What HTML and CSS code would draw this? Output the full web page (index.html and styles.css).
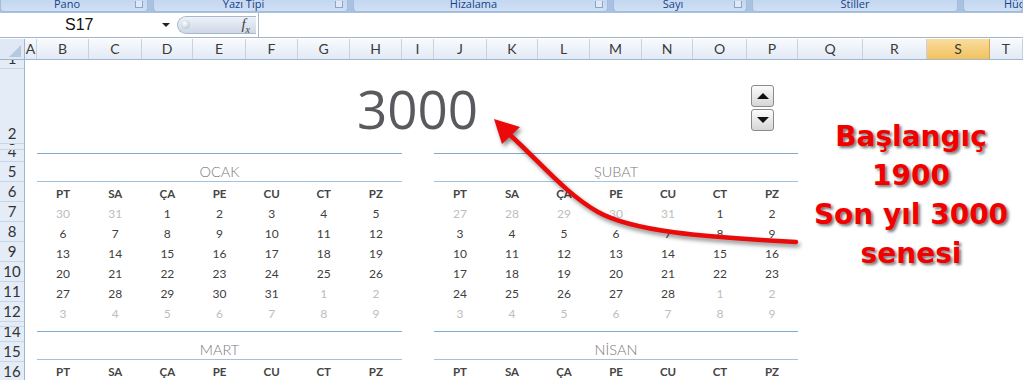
FILE: index.html
```html
<!DOCTYPE html>
<html lang="tr">
<head>
<meta charset="UTF-8">
<title>Takvim 3000</title>
<link rel="stylesheet" href="styles.css">
</head>
<body>
    <div class="ribbon">
        <div class="group g-pano"><span>Pano</span><i class="launcher"></i></div>
        <div class="group g-font"><span>Yazı Tipi</span><i class="launcher"></i></div>
        <div class="group g-align"><span>Hizalama</span><i class="launcher"></i></div>
        <div class="group g-num"><span>Sayı</span><i class="launcher"></i></div>
        <div class="group g-style"><span>Stiller</span></div>
        <div class="group g-cells"><span>Hücreler</span></div>
    </div>

    <div class="formula-bar">
        <div class="name-box"><span>S17</span><i class="dd"></i></div>
        <div class="fx-pill"><i class="grip"></i><span class="fx">f<sub>x</sub></span></div>
        <div class="formula-input"></div>
    </div>

    <div class="sheet">
        <div class="corner"><i></i></div>
        <div class="col-heads">
            <div>A</div><div>B</div><div>C</div><div>D</div><div>E</div>
            <div>F</div><div>G</div><div>H</div><div>I</div><div>J</div>
            <div>K</div><div>L</div><div>M</div><div>N</div><div>O</div>
            <div>P</div><div>Q</div><div>R</div><div class="sel">S</div><div>T</div>
        </div>
        <div class="row-heads">
            <div>1</div><div>2</div><div>3</div><div>4</div>
            <div>5</div><div>6</div><div>7</div><div>8</div>
            <div>9</div><div>10</div><div>11</div><div>12</div>
            <div>13</div><div>14</div><div>15</div><div>16</div>
        </div>
        <div class="cells">
            <div class="year" id="year">3000</div>
            <div class="spin">
                <div class="spin-btn"><i class="tri-up"></i></div>
                <div class="spin-btn"><i class="tri-down"></i></div>
            </div>
            <div class="cal-stack left">
                <div class="cal" data-month="0"></div>
                <div class="cal" data-month="2"></div>
            </div>
            <div class="cal-stack right">
                <div class="cal" data-month="1"></div>
                <div class="cal" data-month="3"></div>
            </div>
        </div>
    </div>

    <!-- note on top of the sheet -->
    <svg class="arrow" width="1023" height="380" viewBox="0 0 1023 380">
        <path d="M 796 242 C 700 237 632 231 598 212 C 566 194 540 162 509 134" fill="none" stroke="#ea0a0a" stroke-width="4.5" stroke-linecap="round"/>
        <polygon points="494,119 520,127 502,144" fill="#ea0a0a"/>
    </svg>
    <div class="note">Başlangıç<br>1900<br>Son yıl 3000<br>senesi</div>

    <script>
        const MONTHS = ['OCAK', 'ŞUBAT', 'MART', 'NİSAN'];
        const DAYS = ['PT', 'SA', 'ÇA', 'PE', 'CU', 'CT', 'PZ'];
        let year = parseInt(document.getElementById('year').textContent);

        function buildCal(cal) {
            let month = parseInt(cal.dataset.month);
            let first = new Date(year, month, 1);
            first.setFullYear(year);
            let offset = (first.getDay() + 6) % 7;

            let html = '<div class="cal-title">' + MONTHS[month] + '</div><div class="cal-days">';
            DAYS.forEach(d => { html += '<div class="dow">' + d + '</div>'; });

            for (let i = 0; i < 42; i++) {
                let day = new Date(first);
                day.setDate(1 - offset + i);
                let cls = day.getMonth() === month ? '' : ' class="other"';
                html += '<div' + cls + '>' + day.getDate() + '</div>';
            }
            cal.innerHTML = html + '</div>';
        }

        document.querySelectorAll('.cal').forEach(buildCal);
    </script>
</body>
</html>
```

FILE: styles.css
```css
:root {
    --cols: 12px 52px 53px 51px 53px 52px 52px 52px 32px 53px 51px 52px 52px 51px 54px 51px 65px 64px 63px 1fr;
    --rows: 9px 75px 6px 12px 20px 20px 20px 20px 20px 20px 20px 20px 5px 15px 20px 20px;
}

body, html {
    margin: 0;
    padding: 0;
}
body {
    position: relative;
    width: 1023px;
    height: 380px;
    overflow: hidden;
    background: #fff;
    font-family: Lato, "Open Sans", sans-serif;
}

/* RIBBON */
.ribbon {
    display: flex;
    gap: 5px;
    height: 13px;
    background: #a9c2e2;
}
.group {
    position: relative;
    box-sizing: border-box;
    height: 12px;
    background: linear-gradient(#c3d7f0, #d0e0f4);
    border: 1px solid #a3bcdc;
    border-top: 0;
    border-radius: 0 0 4px 4px;
    color: #15428b;
    font-family: "Open Sans", sans-serif;
    font-size: 11px;
    line-height: 7px;
    text-align: center;
    overflow: hidden;
    padding-right: 14px;
}
.g-pano { width: 148px; }
.g-font { width: 195px; }
.g-align { width: 255px; }
.g-num { width: 134px; }
.g-style { width: 206px; padding-right: 0; }
.g-cells { flex: 1; text-align: left; padding-left: 40px; }
.launcher {
    position: absolute;
    right: 4px;
    top: 1px;
    width: 6px;
    height: 6px;
    border: 1px solid #8aa5c8;
    border-top: 0;
    background: #dfe9f6;
}

/* FORMULA BAR */
.formula-bar {
    display: flex;
    height: 24px;
    border-bottom: 1px solid #a3b5cb;
    margin-bottom: 1px;
    background: #fff;
}
.name-box {
    position: relative;
    width: 175px;
    font-family: "Liberation Sans", sans-serif;
    font-size: 16px;
    line-height: 24px;
    padding-left: 65px;
    box-sizing: border-box;
    color: #111;
}
.dd {
    position: absolute;
    left: 162px;
    top: 10px;
    border-left: 4px solid transparent;
    border-right: 4px solid transparent;
    border-top: 4px solid #222;
}
.fx-pill {
    position: relative;
    width: 79px;
    height: 18px;
    margin: 3px 0 0 2px;
    box-sizing: border-box;
    border: 1px solid #a9b9cd;
    border-right: 0;
    border-radius: 10px 0 0 10px;
    background: linear-gradient(#eef2f8, #cdd8e6);
}
.grip {
    position: absolute;
    left: 3px;
    top: 3px;
    width: 9px;
    height: 9px;
    border-radius: 50%;
    background: radial-gradient(circle at 40% 35%, #fff, #aab7c8);
}
.fx {
    position: absolute;
    right: 6px;
    top: -1px;
    font-family: "Liberation Serif", serif;
    font-style: italic;
    font-size: 15px;
    color: #444;
}
.fx sub {
    font-size: 10px;
}
.formula-input {
    flex: 1;
    border-left: 1px solid #a9b9cd;
    margin-left: 2px;
}

/* SHEET */
.sheet {
    display: grid;
    grid-template-columns: 25px 1fr;
    grid-template-rows: 21px 1fr;
}
.corner {
    position: relative;
    background: #dfe8f4;
    border-right: 1px solid #9eb6ce;
    border-bottom: 1px solid #9eb6ce;
}
.corner i {
    position: absolute;
    right: 3px;
    bottom: 2px;
    border-left: 12px solid transparent;
    border-bottom: 12px solid #b6c8de;
}
.col-heads {
    display: grid;
    grid-template-columns: var(--cols);
    background: linear-gradient(#f8fafd, #e2eaf5);
    border-bottom: 1px solid #9eb6ce;
}
.col-heads div {
    border-right: 1px solid #c4d2e2;
    text-align: center;
    font-size: 14px;
    line-height: 20px;
    color: #3a3a3a;
}
.col-heads .sel {
    background: linear-gradient(#f9dc9f, #f2c25e);
    border-right-color: #d9a84a;
}
.row-heads {
    display: grid;
    grid-template-rows: var(--rows);
    background: #e4ecf7;
    border-right: 1px solid #9eb6ce;
}
.row-heads div {
    display: flex;
    align-items: flex-end;
    justify-content: center;
    overflow: hidden;
    border-bottom: 1px solid #c6d5e8;
    font-size: 15px;
    line-height: 19px;
    color: #333;
}
.cells {
    display: grid;
    grid-template-columns: var(--cols);
    grid-template-rows: var(--rows);
}

/* YEAR + SPINNER */
.year {
    grid-column: 2 / 17;
    grid-row: 2;
    padding-top: 13px;
    text-align: center;
    font-family: "Open Sans", sans-serif;
    font-size: 53px;
    line-height: 1;
    color: #585a5e;
}
.spin {
    grid-column: 16;
    grid-row: 2;
    align-self: start;
    justify-self: start;
    display: flex;
    flex-direction: column;
    gap: 2px;
    margin: 16px 0 0 4px;
}
.spin-btn {
    display: flex;
    align-items: center;
    justify-content: center;
    width: 23px;
    height: 22px;
    box-sizing: border-box;
    border: 1px solid #8a8a8a;
    border-radius: 3px;
    background: linear-gradient(#fbfbfb, #d6d6d6);
}
.tri-up {
    border-left: 6px solid transparent;
    border-right: 6px solid transparent;
    border-bottom: 6px solid #111;
}
.tri-down {
    border-left: 6px solid transparent;
    border-right: 6px solid transparent;
    border-top: 6px solid #111;
}

/* CALENDARS */
.cal-stack {
    grid-row: 4 / 17;
    display: flex;
    flex-direction: column;
    padding-top: 3px;
    overflow: hidden;
}
.cal-stack.left { grid-column: 2 / 9; }
.cal-stack.right { grid-column: 10 / 17; }
.cal {
    border-top: 1px solid #7eaacb;
    padding-bottom: 8px;
}
.cal-title {
    height: 28px;
    box-sizing: border-box;
    display: flex;
    align-items: flex-end;
    justify-content: center;
    padding-bottom: 2px;
    border-bottom: 1px solid #a2c2dc;
    font-size: 14.5px;
    font-weight: 300;
    line-height: 1;
    color: #7a7a7a;
}
.cal-days {
    display: grid;
    grid-template-columns: repeat(7, 1fr);
    grid-auto-rows: 20px;
    align-items: center;
    margin-top: 1px;
    text-align: center;
    font-size: 12px;
    color: #404040;
}
.cal-days .dow {
    font-weight: 700;
    font-size: 11.5px;
    color: #444;
}
.cal-days .other {
    color: #bdbdbd;
}

/* NOTE */
.arrow {
    position: absolute;
    left: 0;
    top: 0;
    pointer-events: none;
    filter: drop-shadow(2px 3px 2px rgba(0, 0, 0, 0.45));
}
.note {
    position: absolute;
    left: 800px;
    top: 117px;
    width: 222px;
    text-align: center;
    font-family: "DejaVu Sans", sans-serif;
    font-weight: bold;
    font-size: 28px;
    line-height: 39px;
    color: #f20000;
    text-shadow: 2px 2px 3px rgba(0, 0, 0, 0.55);
}
```
